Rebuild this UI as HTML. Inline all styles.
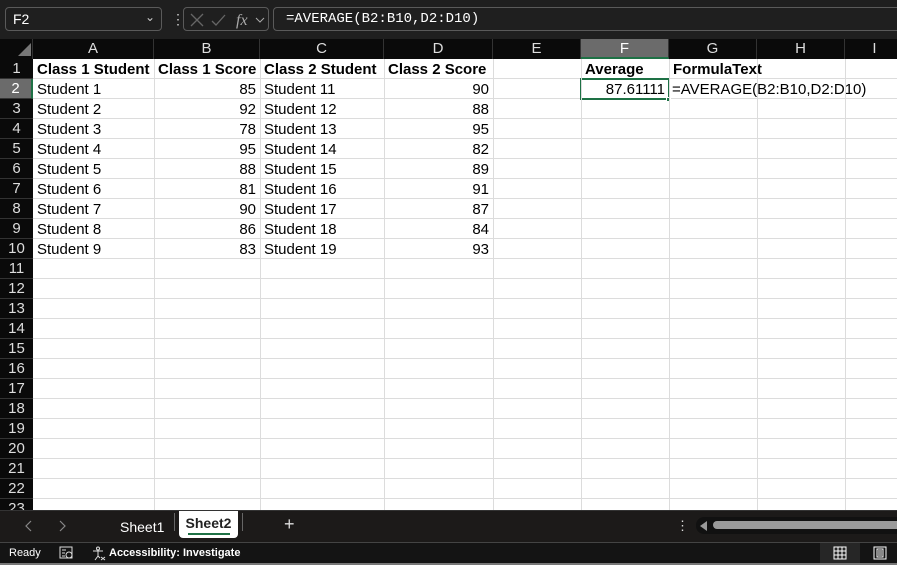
<!DOCTYPE html>
<html><head><style>
*{margin:0;padding:0;box-sizing:border-box}
body{width:897px;height:565px;overflow:hidden;background:#fff;font-family:"Liberation Sans",sans-serif;position:relative}
.top{position:absolute;left:0;top:0;width:897px;height:39px;background:#1f1f1f}
.nb{position:absolute;left:5px;top:7px;width:157px;height:24px;border:1px solid #5a5a5a;border-radius:4px;color:#fff;font-size:14px;padding:3px 7px}
.fx{position:absolute;left:183px;top:7px;width:86px;height:24px;border:1px solid #5a5a5a;border-radius:4px}
.fb{position:absolute;left:273px;top:7px;width:640px;height:24px;border:1px solid #5a5a5a;border-radius:4px;color:#fff;font-family:"Liberation Mono",monospace;font-size:14px;padding:3px 12px}
.ch{position:absolute;top:39px;height:20px;background:#0a0a0a;color:#ddd;font-size:15px;text-align:center;line-height:20px;border-right:1px solid #333}
.rh{position:absolute;left:0;width:33px;height:20px;background:#0a0a0a;color:#ddd;font-size:15px;text-align:center;line-height:20px;border-bottom:1px solid #333}
.c{position:absolute;height:20px;font-size:15px;line-height:21px;padding:0 4px;color:#000;white-space:nowrap;overflow:visible}
.r{text-align:right}
.b{font-weight:bold}
.vl{position:absolute;top:59px;width:1px;height:451px;background:#dcdcdc}
.hl{position:absolute;left:33px;width:864px;height:1px;background:#dcdcdc}
.tabs{position:absolute;left:0;top:510px;width:897px;height:32px;background:#1c1a19;border-top:1px solid #333}
.st{position:absolute;left:0;top:542px;width:897px;height:21px;background:#141414;border-top:1px solid #444;color:#fff;font-size:11px}
</style></head><body>
<div class="top">
<div class="nb">F2<span style="position:absolute;right:6px;top:2px;color:#ccc;font-size:12px">&#8964;</span></div>
<div style="position:absolute;left:171px;top:11px;color:#ccc;font-size:14px">&#8942;</div>
<div class="fx">
<svg width="86" height="24" style="position:absolute;left:0;top:0"><path d="M7 6l12 12M19 6L7 18" stroke="#666" stroke-width="1.3" fill="none"/><path d="M28 13l4 4 9-10" stroke="#666" stroke-width="1.3" fill="none"/><text x="52" y="17" fill="#aaa" font-style="italic" font-family="Liberation Serif" font-size="16">fx</text><path d="M72 10l4 4 4-4" stroke="#aaa" fill="none"/></svg>
</div>
<div class="fb">=AVERAGE(B2:B10,D2:D10)</div>
</div>
<div class="ch" style="left:0;width:33px;background:#0a0a0a"><svg width="33" height="19"><path d="M31 4v13H18z" fill="#777"/></svg></div>
<div class="ch" style="left:33px;width:121px">A</div>
<div class="ch" style="left:154px;width:106px">B</div>
<div class="ch" style="left:260px;width:124px">C</div>
<div class="ch" style="left:384px;width:109px">D</div>
<div class="ch" style="left:493px;width:88px">E</div>
<div class="ch" style="left:581px;width:88px;background:#6b6b6b;color:#fff;border-bottom:2px solid #1e7145">F</div>
<div class="ch" style="left:669px;width:88px">G</div>
<div class="ch" style="left:757px;width:88px">H</div>
<div class="ch" style="left:845px;width:60px">I</div>
<div id="rows"></div>
<div class="vl" style="left:154px"></div><div class="vl" style="left:260px"></div><div class="vl" style="left:384px"></div><div class="vl" style="left:493px"></div><div class="vl" style="left:581px"></div><div class="vl" style="left:669px"></div><div class="vl" style="left:757px"></div><div class="vl" style="left:845px"></div>
<script>
var h='';for(var i=1;i<=23;i++){var y=59+(i-1)*20;h+='<div class="rh" style="top:'+y+'px;'+(i==2?'background:#6b6b6b;color:#fff;border-right:2px solid #1e7145':'')+'">'+i+'</div><div class="hl" style="top:'+(y+19)+'px"></div>';}
var d=[[85,11,90],[92,12,88],[78,13,95],[95,14,82],[88,15,89],[81,16,91],[90,17,87],[86,18,84],[83,19,93]];
h+='<div class="c b" style="left:33px;top:59px">Class 1 Student</div><div class="c b" style="left:154px;top:59px">Class 1 Score</div><div class="c b" style="left:260px;top:59px">Class 2 Student</div><div class="c b" style="left:384px;top:59px">Class 2 Score</div><div class="c b" style="left:581px;top:59px">Average</div><div class="c b" style="left:669px;top:59px">FormulaText</div>';
for(var j=0;j<9;j++){var y=79+j*20;h+='<div class="c" style="left:33px;top:'+y+'px">Student '+(j+1)+'</div><div class="c r" style="left:154px;width:106px;top:'+y+'px">'+d[j][0]+'</div><div class="c" style="left:260px;top:'+y+'px">Student '+d[j][1]+'</div><div class="c r" style="left:384px;width:109px;top:'+y+'px">'+d[j][2]+'</div>';}
h+='<div class="c r" style="left:581px;width:88px;top:79px">87.61111</div><div class="c" style="left:669px;top:79px;padding-left:3px">=AVERAGE(B2:B10,D2:D10)</div>';
h+='<div style="position:absolute;left:580px;top:78px;width:90px;height:22px;border:2px solid #1e7145"></div><div style="position:absolute;left:666px;top:97px;width:5px;height:5px;background:#1e7145;border:1px solid #fff"></div>';
document.getElementById('rows').innerHTML=h;
</script>
<div class="tabs">
<svg style="position:absolute;left:24px;top:9px" width="10" height="12"><path d="M7 1L2 6l5 5" stroke="#888" fill="none" stroke-width="1.2"/></svg>
<svg style="position:absolute;left:57px;top:9px" width="10" height="12"><path d="M3 1l5 5-5 5" stroke="#888" fill="none" stroke-width="1.2"/></svg>
<span style="position:absolute;left:120px;top:8px;color:#fff;font-size:14px">Sheet1</span>
<div style="position:absolute;left:174px;top:2px;width:1px;height:18px;background:#666"></div>
<div style="position:absolute;left:179px;top:0;width:59px;height:27px;background:#fff;border-radius:0 0 4px 4px;color:#222;font-size:14px;font-weight:bold;text-align:center;padding-top:4px">Sheet2<div style="position:absolute;left:9px;top:22px;width:42px;height:2px;background:#1e7145"></div></div>
<div style="position:absolute;left:242px;top:2px;width:1px;height:18px;background:#666"></div>
<span style="position:absolute;left:284px;top:3px;color:#ddd;font-size:18px">+</span>
<span style="position:absolute;left:676px;top:7px;color:#ddd;font-size:13px">&#8942;</span>
<div style="position:absolute;left:696px;top:6px;width:210px;height:17px;background:#111;border-radius:8px"></div>
<svg style="position:absolute;left:699px;top:9px" width="10" height="12"><path d="M8 1v10L1 6z" fill="#999"/></svg>
<div style="position:absolute;left:713px;top:10px;width:190px;height:8px;background:#9a9a9a;border-radius:4px"></div>
</div>
<div class="st">
<span style="position:absolute;left:9px;top:4px">Ready</span>
<svg style="position:absolute;left:59px;top:3px" width="14" height="14"><rect x="1" y="1" width="12" height="11" fill="none" stroke="#ddd"/><path d="M3 4h4M3 7h3M3 10h3" stroke="#ddd"/><circle cx="10" cy="9" r="3" fill="none" stroke="#ddd"/></svg>
<svg style="position:absolute;left:91px;top:3px" width="15" height="15"><circle cx="7" cy="2.5" r="1.5" fill="none" stroke="#ddd"/><path d="M2 5h10M7 5v5M7 10l-3 4M7 10l2 2M10 11l4 3M14 11l-4 3" stroke="#ddd" fill="none"/></svg>
<span style="position:absolute;left:109px;top:4px;font-weight:bold">Accessibility: Investigate</span>
<div style="position:absolute;left:820px;top:0;width:40px;height:21px;background:#262626"></div>
<svg style="position:absolute;left:833px;top:3px" width="14" height="14"><path d="M1 1h12v12H1zM5 1v12M9 1v12M1 5h12M1 9h12" stroke="#fff" fill="none"/></svg>
<svg style="position:absolute;left:873px;top:3px" width="14" height="14"><path d="M1 1h12v12H1z" stroke="#fff" fill="none"/><path d="M4 3h6v8H4zM5 5h4M5 7h4M5 9h4" stroke="#fff" fill="none"/></svg>
</div>
<div style="position:absolute;left:0;top:563px;width:897px;height:2px;background:#777"></div>
</body></html>
